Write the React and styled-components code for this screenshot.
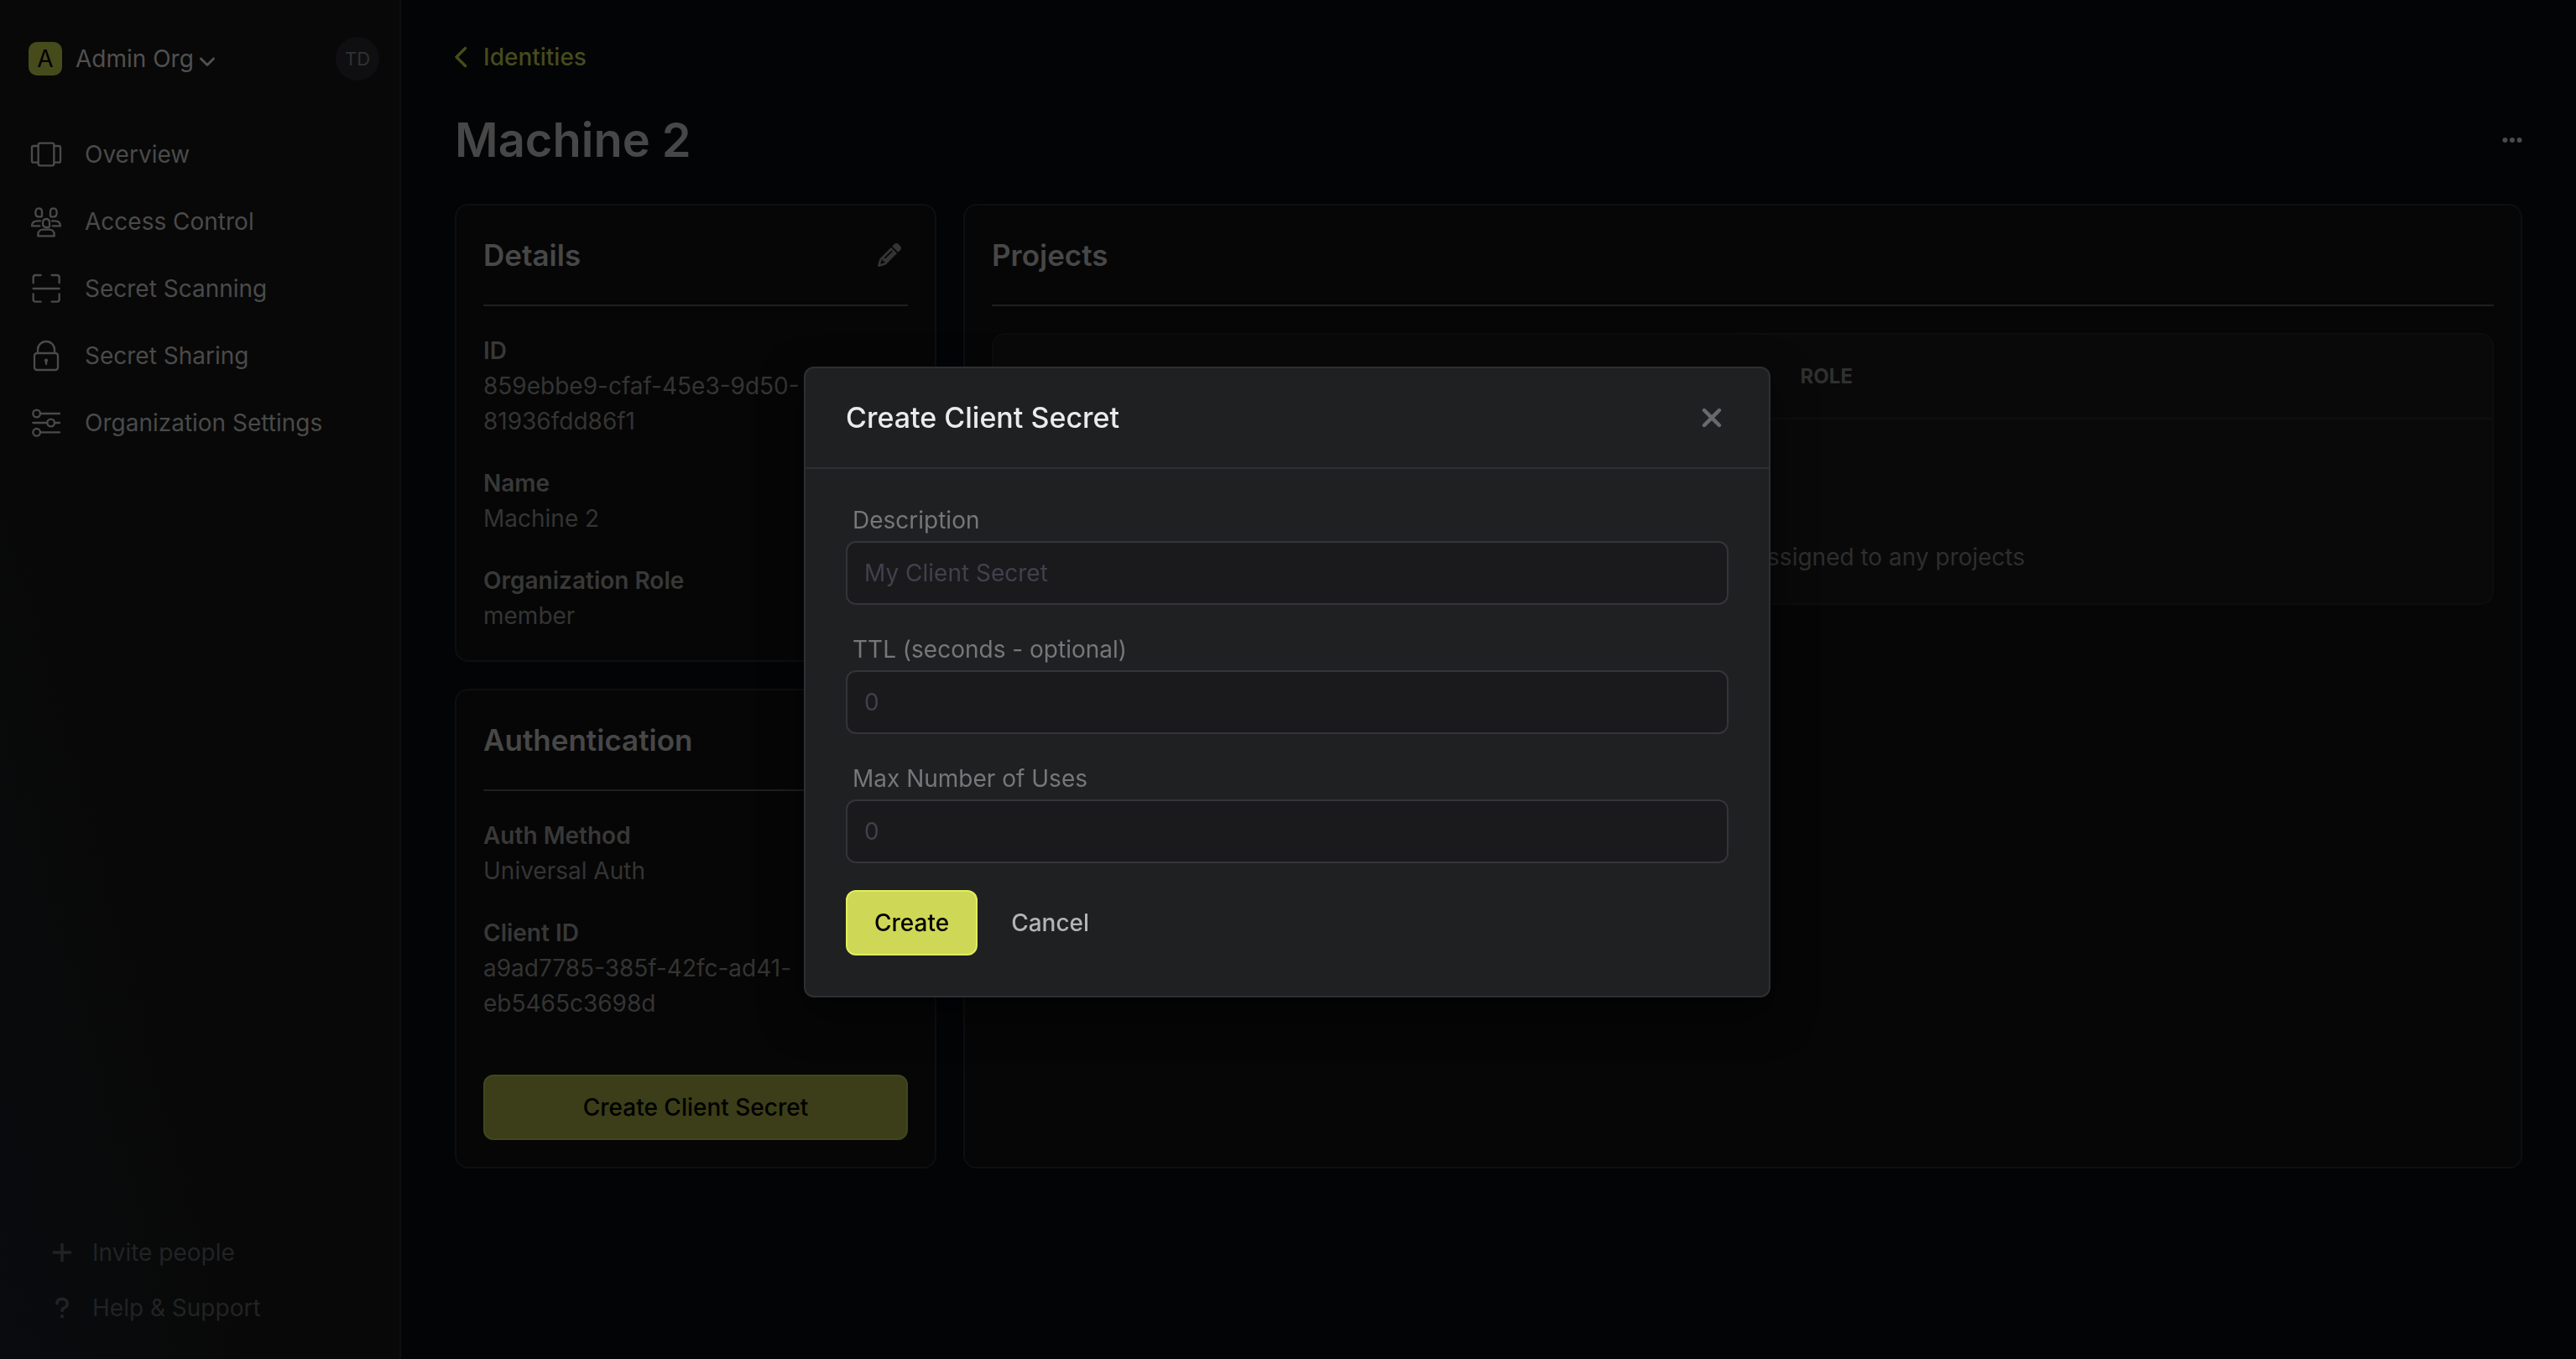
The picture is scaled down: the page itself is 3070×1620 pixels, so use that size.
import React from "react";
import styled, { createGlobalStyle, ThemeProvider } from "styled-components";
import {
  FaAngleDown,
  FaChevronLeft,
  FaEllipsis,
  FaFolder,
  FaPencil,
  FaPlus,
  FaQuestion,
  FaXmark
} from "react-icons/fa6";

const theme = {
  colors: {
    page: "#030406",
    card: "#060606",
    cardBorder: "#0e0f10",
    table: "#090909",
    tableBorder: "#0c0d0d",
    rule: "#1f2020",
    heading: "#474747",
    nav: "#4a4a4a",
    label: "#383838",
    value: "#343434",
    primaryDim: "#464b1b",
    modal: "#1f2022",
    modalBorder: "#2e2f33",
    input: "#1a1a1c",
    inputBorder: "#34353a",
    placeholder: "#40414d"
  }
};

const GlobalStyle = createGlobalStyle`
  * {
    box-sizing: border-box;
  }
  body {
    margin: 0;
    background: #030406;
    font-family: Inter, "Liberation Sans", sans-serif;
    font-size: 28px;
    line-height: 42px;
  }
  h1, h2, p, dl, dt, dd, ul {
    margin: 0;
    padding: 0;
  }
  button, input {
    font: inherit;
  }
  svg {
    display: block;
    flex-shrink: 0;
  }
`;

const Layout = styled.div`
  display: flex;
  min-height: 100vh;
  background: ${props => props.theme.colors.page};
`;

const Sidebar = styled.aside`
  display: flex;
  flex-direction: column;
  justify-content: space-between;
  flex-shrink: 0;
  width: 478px;
  padding: 44px 0 28px;
  border-right: 2px solid #0e0f0f;
  background: linear-gradient(75deg, #0a0b0f 0%, #090a0b 16%, #080808 34%);
`;

const OrgBar = styled.div`
  display: flex;
  align-items: center;
  justify-content: space-between;
  height: 52px;
  margin-bottom: 48px;
  padding: 0 24px 0 34px;
`;

const OrgButton = styled.button`
  display: flex;
  align-items: center;
  padding: 0;
  border: 0;
  background: none;
  color: #505050;
  > svg {
    width: 24px;
    height: 24px;
    margin: 6px 0 0 4px;
  }
`;

const OrgBadge = styled.span`
  display: flex;
  align-items: center;
  justify-content: center;
  width: 40px;
  height: 40px;
  margin-right: 16px;
  border-radius: 10px;
  background: ${props => props.theme.colors.primaryDim};
  color: #000;
`;

const Avatar = styled.button`
  width: 52px;
  height: 52px;
  padding: 0;
  border: 0;
  border-radius: 50%;
  background: #0f0f11;
  color: #313133;
  font-size: 22px;
`;

const NavLink = styled.a`
  display: flex;
  align-items: center;
  gap: 27px;
  height: 80px;
  padding-left: 36px;
  color: ${props => props.theme.colors.nav};
  text-decoration: none;
`;

const NavIcon = styled.svg`
  width: 38px;
  height: 38px;
  fill: none;
  stroke: currentColor;
  stroke-width: 7;
  stroke-linecap: round;
  stroke-linejoin: round;
`;

const FooterButton = styled.button`
  display: flex;
  align-items: center;
  gap: 22px;
  width: 100%;
  height: 66px;
  padding: 0 0 0 60px;
  border: 0;
  background: none;
  color: #222324;
`;

const Main = styled.main`
  flex: 1;
  min-width: 0;
  padding: 47px 64px;
`;

const BackLink = styled.a`
  display: inline-flex;
  align-items: center;
  gap: 16px;
  color: ${props => props.theme.colors.primaryDim};
  font-weight: 500;
  text-decoration: none;
  svg {
    width: 18px;
  }
`;

const TitleRow = styled.div`
  display: flex;
  align-items: center;
  justify-content: space-between;
  height: 72px;
  margin: 38px 0 40px;
  h1 {
    color: ${props => props.theme.colors.heading};
    font-size: 56px;
    font-weight: 600;
    line-height: 72px;
  }
  svg {
    width: 24px;
  }
`;

const IconButton = styled.button`
  display: flex;
  padding: 0;
  border: 0;
  background: none;
  color: ${props => props.color};
  font-size: ${props => props.$size}px;
`;

const Columns = styled.div`
  display: flex;
  gap: 32px;
`;

const SideColumn = styled.div`
  display: flex;
  flex-direction: column;
  flex: 0 0 574px;
  gap: 32px;
`;

const Card = styled.section`
  flex: ${props => (props.$grow ? 1 : "none")};
  min-width: 0;
  padding: 32px;
  border: 2px solid ${props => props.theme.colors.cardBorder};
  border-radius: 16px;
  background: ${props => props.theme.colors.card};
`;

const CardHeader = styled.div`
  display: flex;
  align-items: center;
  justify-content: space-between;
  height: 88px;
  margin-bottom: 32px;
  padding: 0 8px 32px 0;
  border-bottom: 2px solid ${props => props.theme.colors.rule};
  h2 {
    color: ${props => props.theme.colors.heading};
    font-size: 35px;
    font-weight: 600;
  }
`;

const Fields = styled.dl`
  display: flex;
  flex-direction: column;
  gap: 32px;
  dt {
    color: ${props => props.theme.colors.label};
    font-weight: 600;
  }
  dd {
    color: ${props => props.theme.colors.value};
  }
`;

const Button = styled.button`
  height: 78px;
  padding: 0 32px;
  border: 2px solid ${props => (props.$dim ? "#42471a" : "#e0ee5c")};
  border-radius: 12px;
  background: ${props => (props.$dim ? "#3b3e18" : "#cfd756")};
  color: #000;
  font-weight: 500;
`;

const WideButton = styled(Button)`
  width: 100%;
  margin-top: 64px;
`;

const PlainButton = styled(Button)`
  padding: 0;
  border: 0;
  background: none;
  color: #b4b4b5;
`;

const TableFrame = styled.div`
  overflow: hidden;
  border: 2px solid ${props => props.theme.colors.tableBorder};
  border-radius: 16px;
  background: ${props => props.theme.colors.table};
`;

const ProjectTable = styled.table`
  width: 100%;
  border-collapse: collapse;
  table-layout: fixed;
  th {
    height: 100px;
    padding: 0 40px;
    border-bottom: 2px solid #0e0f0f;
    color: #303030;
    font-size: 24px;
    font-weight: 700;
    text-align: left;
    text-transform: uppercase;
  }
  td {
    height: 220px;
    padding: 0;
    color: #2e2e2e;
  }
`;

const NameHeading = styled.th`
  width: 51.6%;
`;

const EmptyState = styled.div`
  display: flex;
  flex-direction: column;
  align-items: center;
  gap: 32px;
  padding-top: 20px;
  svg {
    width: 56px;
    height: 56px;
  }
`;

const Overlay = styled.div`
  position: fixed;
  inset: 0;
  display: flex;
  align-items: center;
  justify-content: center;
  padding: 6px 2px 0 0;
`;

const Modal = styled.div`
  width: 1152px;
  max-width: 100%;
  border: 2px solid ${props => props.theme.colors.modalBorder};
  border-radius: 12px;
  background: ${props => props.theme.colors.modal};
  box-shadow: 0 20px 50px rgba(0, 0, 0, 0.5);
`;

const ModalHeader = styled.div`
  display: flex;
  align-items: center;
  justify-content: space-between;
  height: 120px;
  padding: 0 50px 0 48px;
  border-bottom: 2px solid ${props => props.theme.colors.modalBorder};
  h2 {
    color: #ebebec;
    font-size: 34px;
    font-weight: 500;
  }
`;

const ModalForm = styled.form`
  display: flex;
  flex-direction: column;
  gap: 32px;
  padding: 40px 48px 48px;
`;

const Field = styled.div`
  display: flex;
  flex-direction: column;
  gap: 4px;
  label {
    padding-left: 8px;
    color: #77777a;
  }
  input {
    width: 100%;
    height: 76px;
    padding: 0 20px;
    border: 2px solid ${props => props.theme.colors.inputBorder};
    border-radius: 12px;
    outline: none;
    background: ${props => props.theme.colors.input};
    color: #d0d0d2;
  }
  input::placeholder {
    color: ${props => props.theme.colors.placeholder};
    opacity: 1;
  }
`;

const Actions = styled.div`
  display: flex;
  align-items: center;
  gap: 40px;
`;

const navItems = [
  {
    label: "Overview",
    icon: (
      <>
        <rect x="29" y="17" width="56" height="80" rx="6" />
        <path d="M29 27H12a6 6 0 0 0-6 6v47a6 6 0 0 0 6 6h17M85 27h17a6 6 0 0 1 6 6v47a6 6 0 0 1-6 6H85" />
      </>
    )
  },
  {
    label: "Access Control",
    icon: (
      <>
        <path d="M30 10c8 0 12 5 12 12v13q0 5-5 5h-7c-8 0-11-6-11-14s3-16 11-16z" />
        <path d="M84 10c-8 0-12 5-12 12v13q0 5 5 5h7c8 0 11-6 11-14s-3-16-11-16z" />
        <path d="M57 48c8 0 12 6 12 13v12q0 5-5 5h-7c-8 0-12-6-12-15s4-15 12-15z" />
        <path d="M36 55H27C14 55 6 61 6 73h28M78 55h9c13 0 21 6 21 18H80" />
        <path d="M28 109v-5c0-12 8-18 18-18h22c10 0 18 6 18 18v5z" />
      </>
    )
  },
  {
    label: "Secret Scanning",
    icon: (
      <path d="M11 37V17a8 8 0 0 1 8-8h19M77 9h19a8 8 0 0 1 8 8v20M11 76v20a8 8 0 0 0 8 8h19M77 104h19a8 8 0 0 0 8-8V76M11 57h93" />
    )
  },
  {
    label: "Secret Sharing",
    icon: (
      <>
        <rect x="15" y="48" width="84" height="60" rx="9" />
        <path d="M27 48V35a30 29 0 0 1 60 0v13M57 76v11" />
        <circle cx="57" cy="74" r="3" />
      </>
    )
  },
  {
    label: "Organization Settings",
    icon: (
      <>
        <circle cx="23" cy="24" r="13" />
        <circle cx="74" cy="57" r="13" />
        <circle cx="23" cy="91" r="13" />
        <path d="M36 24h69M10 57h51M87 57h18M36 91h69" />
      </>
    )
  }
];

const details = [
  { label: "ID", value: "859ebbe9-cfaf-45e3-9d50-81936fdd86f1" },
  { label: "Name", value: "Machine 2" },
  { label: "Organization Role", value: "member" }
];

const authentication = [
  { label: "Auth Method", value: "Universal Auth" },
  { label: "Client ID", value: "a9ad7785-385f-42fc-ad41-eb5465c3698d" }
];

const formFields = [
  { id: "description", label: "Description", placeholder: "My Client Secret" },
  { id: "ttl", label: "TTL (seconds - optional)", placeholder: "0" },
  { id: "max-uses", label: "Max Number of Uses", placeholder: "0" }
];

function FieldList({ items }) {
  return (
    <Fields>
      {items.map(item => (
        <div key={item.label}>
          <dt>{item.label}</dt>
          <dd>{item.value}</dd>
        </div>
      ))}
    </Fields>
  );
}

function SideMenu() {
  return (
    <Sidebar>
      <div>
        <OrgBar>
          <OrgButton type="button">
            <OrgBadge>A</OrgBadge>
            Admin Org
            <FaAngleDown />
          </OrgButton>
          <Avatar type="button">TD</Avatar>
        </OrgBar>
        <nav>
          {navItems.map(item => (
            <NavLink href="#" key={item.label}>
              <NavIcon viewBox="0 0 114 114" aria-hidden="true">
                {item.icon}
              </NavIcon>
              {item.label}
            </NavLink>
          ))}
        </nav>
      </div>
      <div>
        <FooterButton type="button">
          <FaPlus />
          Invite people
        </FooterButton>
        <FooterButton type="button">
          <FaQuestion />
          Help &amp; Support
        </FooterButton>
      </div>
    </Sidebar>
  );
}

function CreateSecretModal() {
  return (
    <Overlay>
      <Modal role="dialog" aria-modal="true" aria-labelledby="modal-title">
        <ModalHeader>
          <h2 id="modal-title">Create Client Secret</h2>
          <IconButton type="button" aria-label="Close" color="#68696d" $size={36}>
            <FaXmark />
          </IconButton>
        </ModalHeader>
        <ModalForm onSubmit={e => e.preventDefault()}>
          {formFields.map(field => (
            <Field key={field.id}>
              <label htmlFor={field.id}>{field.label}</label>
              <input id={field.id} type="text" placeholder={field.placeholder} />
            </Field>
          ))}
          <Actions>
            <Button type="submit">Create</Button>
            <PlainButton type="button">Cancel</PlainButton>
          </Actions>
        </ModalForm>
      </Modal>
    </Overlay>
  );
}

function App() {
  return (
    <ThemeProvider theme={theme}>
      <GlobalStyle />
      <Layout>
        <SideMenu />
        <Main>
          <BackLink href="#">
            <FaChevronLeft />
            Identities
          </BackLink>
          <TitleRow>
            <h1>Machine 2</h1>
            <IconButton type="button" aria-label="More" color="#4a4a4a" $size={28}>
              <FaEllipsis />
            </IconButton>
          </TitleRow>
          <Columns>
            <SideColumn>
              <Card>
                <CardHeader>
                  <h2>Details</h2>
                  <IconButton type="button" aria-label="Edit" color="#343434" $size={28}>
                    <FaPencil />
                  </IconButton>
                </CardHeader>
                <FieldList items={details} />
              </Card>
              <Card>
                <CardHeader>
                  <h2>Authentication</h2>
                </CardHeader>
                <FieldList items={authentication} />
                <WideButton type="button" $dim>
                  Create Client Secret
                </WideButton>
              </Card>
            </SideColumn>
            <Card $grow>
              <CardHeader>
                <h2>Projects</h2>
              </CardHeader>
              <TableFrame>
                <ProjectTable>
                  <thead>
                    <tr>
                      <NameHeading>Name</NameHeading>
                      <th>Role</th>
                    </tr>
                  </thead>
                  <tbody>
                    <tr>
                      <td colSpan="2">
                        <EmptyState>
                          <FaFolder />
                          <p>This identity has not been assigned to any projects</p>
                        </EmptyState>
                      </td>
                    </tr>
                  </tbody>
                </ProjectTable>
              </TableFrame>
            </Card>
          </Columns>
        </Main>
      </Layout>
      <CreateSecretModal />
    </ThemeProvider>
  );
}

export default App;
